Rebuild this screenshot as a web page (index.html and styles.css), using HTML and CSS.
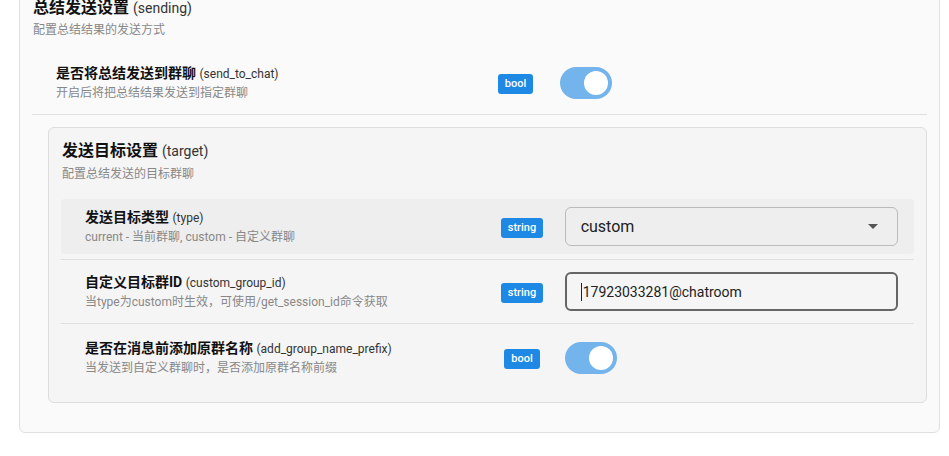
FILE: index.html
```html
<!DOCTYPE html>
<html lang="zh-CN">
<head>
    <meta charset="UTF-8">
    <meta name="viewport" content="width=device-width, initial-scale=1.0">
    <title>总结发送设置</title>
    <link rel="stylesheet" href="styles.css">
</head>
<body>

<!-- 分组: sending -->
<div class="group-card">
    <div class="group-head">
        <div class="group-title">总结发送设置 <span class="key">(sending)</span></div>
        <div class="group-desc">配置总结结果的发送方式</div>
    </div>

    <div class="field">
        <div class="row">
            <div class="label">
                <div class="label-title">是否将总结发送到群聊 <span class="key">(send_to_chat)</span></div>
                <div class="label-desc">开启后将把总结结果发送到指定群聊</div>
            </div>
            <div class="type-col"><span class="badge">bool</span></div>
            <div class="control-col">
                <div class="switch on"><span class="knob"></span></div>
            </div>
        </div>
    </div>

    <!-- 子分组: target -->
    <div class="sub-card">
        <div class="group-head">
            <div class="group-title">发送目标设置 <span class="key">(target)</span></div>
            <div class="group-desc">配置总结发送的目标群聊</div>
        </div>

        <div class="field first">
            <div class="row hover">
                <div class="label">
                    <div class="label-title">发送目标类型 <span class="key">(type)</span></div>
                    <div class="label-desc">current - 当前群聊, custom - 自定义群聊</div>
                </div>
                <div class="type-col"><span class="badge">string</span></div>
                <div class="control-col">
                    <div class="select">
                        <span>custom</span>
                        <span class="arrow"></span>
                    </div>
                </div>
            </div>
        </div>

        <div class="field">
            <div class="row">
                <div class="label">
                    <div class="label-title">自定义目标群ID <span class="key">(custom_group_id)</span></div>
                    <div class="label-desc">当type为custom时生效，可使用/get_session_id命令获取</div>
                </div>
                <div class="type-col"><span class="badge">string</span></div>
                <div class="control-col">
                    <div class="text-input focused"><span class="caret"></span>17923033281@chatroom</div>
                </div>
            </div>
        </div>

        <div class="field last">
            <div class="row">
                <div class="label">
                    <div class="label-title">是否在消息前添加原群名称 <span class="key">(add_group_name_prefix)</span></div>
                    <div class="label-desc">当发送到自定义群聊时，是否添加原群名称前缀</div>
                </div>
                <div class="type-col"><span class="badge">bool</span></div>
                <div class="control-col">
                    <div class="switch on"><span class="knob"></span></div>
                </div>
            </div>
        </div>
    </div>
</div>

</body>
</html>
```

FILE: styles.css
```css
body {
    font-family: Roboto, "Noto Sans CJK SC", sans-serif;
    background-color: #fff;
    color: #222;
    margin: 0;
    padding: 0 9px 0 19px;
}

.group-card {
    margin-top: -16px;
    padding: 12px;
    background-color: #fafafa;
    border: 1px solid #e0e0e0;
    border-radius: 6px;
}

.group-title {
    font-size: 16px;
    line-height: 22px;
    height: 22px;
    font-weight: bold;
    color: #111;
    padding-left: 1px;
}

.group-title .key {
    font-size: 14px;
    line-height: 1;
    font-weight: normal;
    color: #333;
}

.group-desc {
    font-size: 12px;
    line-height: 18px;
    color: #888;
    margin-top: 2px;
    padding-left: 1px;
}

.group-head {
    margin-bottom: 12px;
}

.field {
    border-bottom: 1px solid #e0e0e0;
}

.field.last {
    border-bottom: none;
}

.field.first {
    padding-bottom: 5px;
}

.row {
    display: flex;
    align-items: center;
    padding: 12px 16px 12px 24px;
    border-radius: 4px;
}

.row.hover {
    background-color: #eee;
    padding-top: 8px;
    padding-bottom: 8px;
}

.field.last .row {
    padding-top: 14px;
}

.label {
    width: 48.5%;
}

.label-title {
    font-size: 14px;
    line-height: 20px;
    height: 20px;
    font-weight: bold;
    color: #111;
}

.label-title .key {
    font-size: 12px;
    line-height: 1;
    font-weight: normal;
    color: #333;
}

.label-desc {
    font-size: 12px;
    line-height: 18px;
    height: 18px;
    color: #888;
    margin-top: 1px;
}

.type-col {
    width: 10.5%;
    text-align: center;
}

.badge {
    display: inline-block;
    background-color: #1e88e5;
    color: #fff;
    font-size: 11px;
    font-weight: 500;
    line-height: 20px;
    padding: 0 7px;
    border-radius: 3px;
}

.control-col {
    width: 41%;
}

.switch {
    position: relative;
    width: 52px;
    height: 32px;
    border-radius: 16px;
    background-color: #e0e0e0;
}

.switch.on {
    background-color: #74b4ec;
}

.knob {
    position: absolute;
    top: 4px;
    left: 4px;
    width: 24px;
    height: 24px;
    border-radius: 50%;
    background-color: #fff;
}

.switch.on .knob {
    left: 24px;
}

.select {
    display: flex;
    align-items: center;
    justify-content: space-between;
    height: 37px;
    padding: 0 19px 0 15px;
    border: 1px solid #bbb;
    border-radius: 6px;
    font-size: 16px;
    color: #222;
}

.arrow {
    width: 0;
    height: 0;
    border-left: 5px solid transparent;
    border-right: 5px solid transparent;
    border-top: 5px solid #555;
}

.text-input {
    display: flex;
    align-items: center;
    height: 35px;
    padding: 0 14px;
    border: 2px solid #666;
    border-radius: 6px;
    font-size: 14px;
    color: #222;
}

.caret {
    width: 1px;
    height: 18px;
    background-color: #222;
    margin-right: 1px;
}

.sub-card {
    margin: 12px 0 17px 16px;
    padding: 12px 12px 13px;
    background-color: #f5f5f5;
    border: 1px solid #ddd;
    border-radius: 6px;
}

.sub-card .group-desc {
    margin-top: 3px;
}

.sub-card .group-head {
    margin-bottom: 16px;
}
```
